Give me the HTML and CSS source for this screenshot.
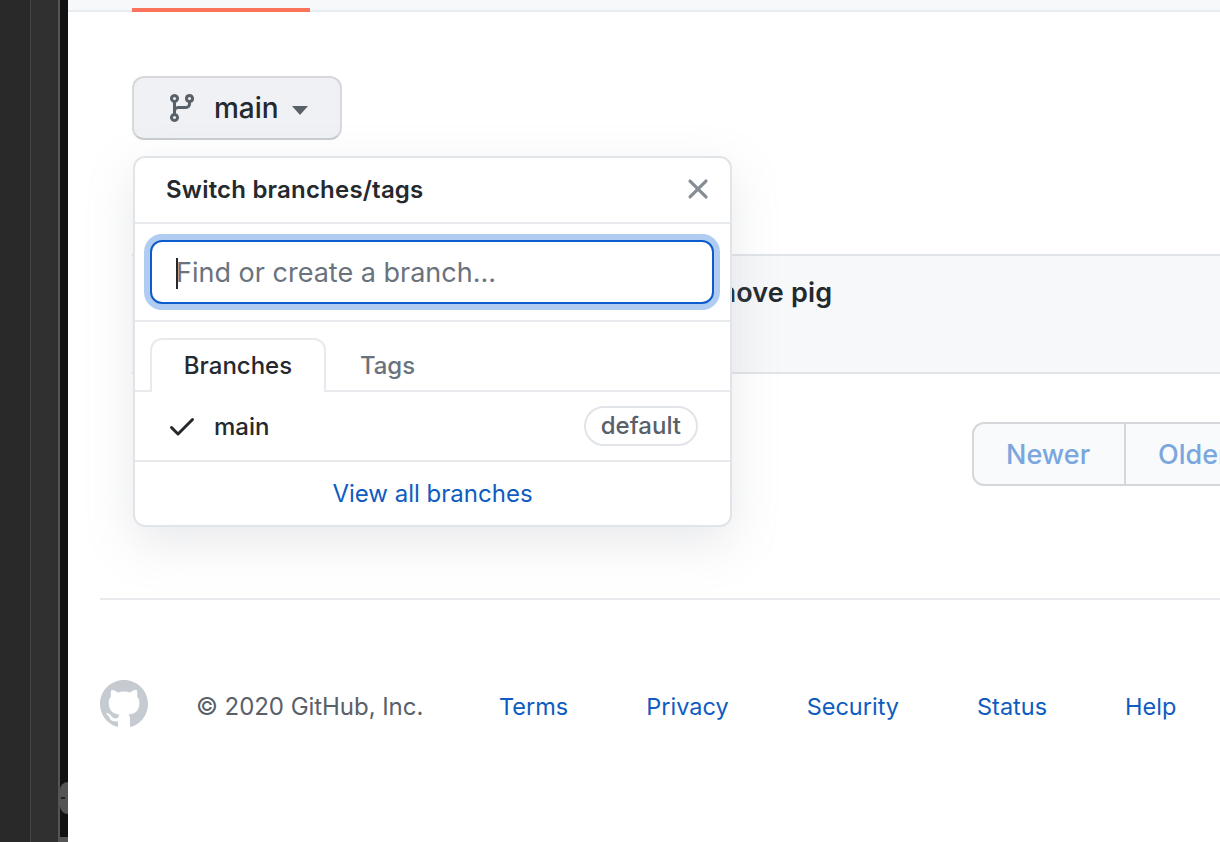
FILE: index.html
```html
<!DOCTYPE html>
<html lang="en">
<head>
<meta charset="utf-8">
<title>Commits</title>
<link rel="stylesheet" href="styles.css">
</head>
<body>
<aside class="side">
  <div class="side-a"></div>
  <div class="side-b"></div>
  <div class="side-c"><span class="side-knob"></span><span class="side-strip"></span></div>
</aside>
<main class="main">
  <div class="tabbar"><span class="tabbar-active"></span></div>
  <div class="content">
    <div class="branch-wrap">
      <button class="branch-btn">
        <svg class="icon-branch" viewBox="0 0 16 16"><path fill-rule="evenodd" d="M11.75 2.5a.75.75 0 100 1.5.75.75 0 000-1.5zm-2.25.75a2.25 2.25 0 113 2.122V6A2.5 2.5 0 0110 8.5H6a1 1 0 00-1 1v1.128a2.251 2.251 0 11-1.5 0V5.372a2.25 2.25 0 111.5 0v1.836A2.492 2.492 0 016 7h4a1 1 0 001-1v-.628A2.25 2.25 0 019.5 3.25zM4.25 12a.75.75 0 100 1.5.75.75 0 000-1.5zM3.5 3.25a.75.75 0 111.5 0 .75.75 0 01-1.5 0z"/></svg>
        <span>main</span>
        <i class="caret"></i>
      </button>
      <section class="popup">
        <header class="popup-head">
          <span class="popup-title">Switch branches/tags</span>
          <svg class="icon-x" viewBox="0 0 16 16"><path fill-rule="evenodd" d="M3.72 3.72a.75.75 0 011.06 0L8 6.94l3.22-3.22a.75.75 0 111.06 1.06L9.06 8l3.22 3.22a.75.75 0 11-1.06 1.06L8 9.06l-3.22 3.22a.75.75 0 01-1.06-1.06L6.94 8 3.72 4.78a.75.75 0 010-1.06z"/></svg>
        </header>
        <div class="popup-filter">
          <div class="field">
            <input class="field-input" type="text" placeholder="Find or create a branch...">
            <span class="field-caret"></span>
          </div>
        </div>
        <nav class="popup-tabs">
          <span class="ptab ptab-on">Branches</span>
          <span class="ptab">Tags</span>
        </nav>
        <div class="popup-row">
          <svg class="icon-check" viewBox="0 0 16 16"><path fill-rule="evenodd" d="M13.78 4.22a.75.75 0 010 1.06l-7.25 7.25a.75.75 0 01-1.06 0L2.22 9.28a.75.75 0 011.06-1.06L6 10.94l6.72-6.72a.75.75 0 011.06 0z"/></svg>
          <span class="row-name">main</span>
          <span class="row-badge">default</span>
        </div>
        <footer class="popup-foot"><a class="link" href="#">View all branches</a></footer>
      </section>
    </div>
    <div class="commit-bar"><span class="commit-title">Remove pig</span></div>
    <div class="pager">
      <span class="pager-btn">Newer</span>
      <span class="pager-btn">Older</span>
    </div>
    <hr class="rule">
    <footer class="foot">
      <svg class="icon-gh" viewBox="0 0 16 16"><path fill-rule="evenodd" d="M8 0C3.58 0 0 3.58 0 8c0 3.54 2.29 6.53 5.47 7.59.4.07.55-.17.55-.38 0-.19-.01-.82-.01-1.49-2.01.37-2.53-.49-2.69-.94-.09-.23-.48-.94-.82-1.13-.28-.15-.68-.52-.01-.53.63-.01 1.08.58 1.23.82.72 1.21 1.87.87 2.33.66.07-.52.28-.87.51-1.07-1.78-.2-3.64-.89-3.64-3.95 0-.87.31-1.59.82-2.15-.08-.2-.36-1.02.08-2.12 0 0 .67-.21 2.2.82.64-.18 1.32-.27 2-.27.68 0 1.36.09 2 .27 1.53-1.04 2.2-.82 2.2-.82.44 1.1.16 1.92.08 2.12.51.56.82 1.27.82 2.15 0 3.07-1.87 3.75-3.65 3.95.29.25.54.73.54 1.48 0 1.07-.01 1.93-.01 2.2 0 .21.15.46.55.38A8.013 8.013 0 0016 8c0-4.42-3.58-8-8-8z"/></svg>
      <span class="copy">© 2020 GitHub, Inc.</span>
      <a class="link foot-link" href="#">Terms</a>
      <a class="link foot-link" href="#">Privacy</a>
      <a class="link foot-link" href="#">Security</a>
      <a class="link foot-link" href="#">Status</a>
      <a class="link foot-link" href="#">Help</a>
    </footer>
  </div>
</main>
</body>
</html>
```
FILE: styles.css
```css
* { box-sizing: border-box; }
html, body { margin: 0; height: 100%; overflow: hidden; }
body {
  display: flex;
  width: 1220px;
  height: 842px;
  background: #fff;
  font-family: Inter, "Liberation Sans", sans-serif;
  color: #24292e;
  font-size: 24px;
}
.side { flex: 0 0 68px; display: flex; background: #111; }
.side-a { width: 31px; background: #292929; border-right: 1px solid #444; }
.side-b { width: 29px; background: #303030; border-right: 2px solid #555; }
.side-c { flex: 1; display: flex; flex-direction: column; background: #111; padding-top: 782px; }
.side-knob { position: relative; display: block; width: 8px; height: 32px; background: #555; border-radius: 8px 0 0 8px; }
.side-knob::after { content: ""; position: absolute; left: 1px; top: 15px; width: 4px; height: 2px; background: #222; }
.side-strip { display: block; height: 5px; margin-top: 23px; background: #555; }
.main { flex: 1; min-width: 0; overflow: hidden; }
.tabbar { height: 12px; padding: 8px 0 0 64px; background: #f6f8fa; border-bottom: 2px solid #e8ebef; }
.tabbar-active { display: block; width: 178px; height: 4px; background: #f9735b; }
.content { padding: 64px 0 0 32px; width: 1152px; }
.branch-wrap { position: relative; margin-left: 32px; height: 64px; }
.branch-btn {
  display: flex; align-items: center;
  width: 210px; height: 64px; padding: 0 0 0 32px;
  background: #eff1f4;
  border: 2px solid #d6d8db; border-bottom-color: #c9ccd0; border-radius: 12px;
  font: 500 28px Inter, sans-serif; color: #24292e;
}
.icon-branch { flex: none; width: 32px; height: 32px; fill: #586069; margin-right: 16px; }
.caret { width: 0; height: 0; margin: 4px 0 0 13px; border: 8px solid transparent; border-top: 9px solid #586069; border-bottom-width: 0; }
.popup {
  position: absolute; left: 1px; top: 80px; width: 599px; height: 371px; z-index: 2;
  background: #fff; border: 2px solid #e1e4e8; border-radius: 12px;
  box-shadow: 0 16px 48px rgba(149,157,165,.22);
  display: flex; flex-direction: column;
}
.popup-head { height: 66px; flex: none; display: flex; align-items: center; justify-content: space-between; padding: 0 15px 2px 31px; border-bottom: 2px solid #e8eaed; }
.popup-title { font-weight: 600; font-size: 24px; letter-spacing: .2px; }
.icon-x { flex: none; width: 34px; height: 34px; fill: #868c93; }
.popup-filter { height: 98px; flex: none; padding: 16px 16px 0 15px; border-bottom: 2px solid #e8eaed; }
.field { position: relative; height: 64px; }
.field-input {
  width: 100%; height: 64px; padding: 0 24px;
  background: #fff; border: 2px solid #0e5ccb; border-radius: 12px;
  box-shadow: 0 0 0 6px #b0cdf1; outline: none;
  font: 400 27px Inter, sans-serif; color: #24292e;
}
.field-input::placeholder { color: #6a737d; opacity: 1; }
.field-caret { position: absolute; left: 26px; top: 18px; width: 2px; height: 31px; background: #24292e; }
.popup-tabs { height: 70px; flex: none; display: flex; padding: 16px 0 0 15px; border-bottom: 2px solid #e8eaed; }
.ptab { width: 123px; height: 54px; text-align: center; line-height: 56px; font-size: 24px; font-weight: 500; letter-spacing: -.1px; color: #6a737d; }
.ptab-on { width: 176px; height: 54px; background: #fff; color: #24292e; letter-spacing: 0; line-height: 52px; border: 2px solid #e8eaed; border-bottom: 0; border-radius: 12px 12px 0 0; }
.popup-row { height: 70px; flex: none; display: flex; align-items: center; padding: 0 32px 0 31px; border-bottom: 2px solid #e8eaed; }
.icon-check { flex: none; width: 32px; height: 32px; fill: #24292e; margin-right: 16px; }
.row-name { flex: 1; font-weight: 500; }
.row-badge { height: 40px; line-height: 36px; padding: 0 15px; border: 2px solid #e1e4e8; border-radius: 20px; color: #586069; font-weight: 500; }
.popup-foot { flex: 1; display: flex; align-items: center; justify-content: center; }
.link { color: #0f5cc0; text-decoration: none; }
.commit-bar {
  margin: 114px 0 0 32px; height: 120px; padding: 21px 0 0 546px;
  background: #f6f8fa; border-top: 2px solid #e1e4e8; border-bottom: 2px solid #e1e4e8;
}
.commit-title { font-size: 27px; font-weight: 600; line-height: 32px; letter-spacing: .2px; }
.pager { display: flex; margin: 48px 0 0 872px; height: 64px; }
.pager-btn {
  flex: none; width: 154px; height: 64px; line-height: 62px; padding-left: 32px;
  background: #f8fafc; border: 2px solid #d5d7da; border-radius: 12px 0 0 12px;
  font-size: 27px; font-weight: 500; color: #7ba6de;
}
.pager-btn + .pager-btn { width: 160px; border-left: 0; border-radius: 0; padding-left: 32px; }
.rule { margin: 112px 0 0; height: 2px; border: 0; background: #e8eaed; }
.foot { display: flex; align-items: center; margin-top: 80px; height: 48px; }
.icon-gh { flex: none; width: 48px; height: 48px; fill: #c6cbd2; margin-right: 48px; }
.copy { flex: none; color: #586069; width: 303px; padding-top: 4px; letter-spacing: -.05px; }
.foot-link { flex: none; margin-right: 78px; padding-top: 4px; font-size: 23.5px; }
```
